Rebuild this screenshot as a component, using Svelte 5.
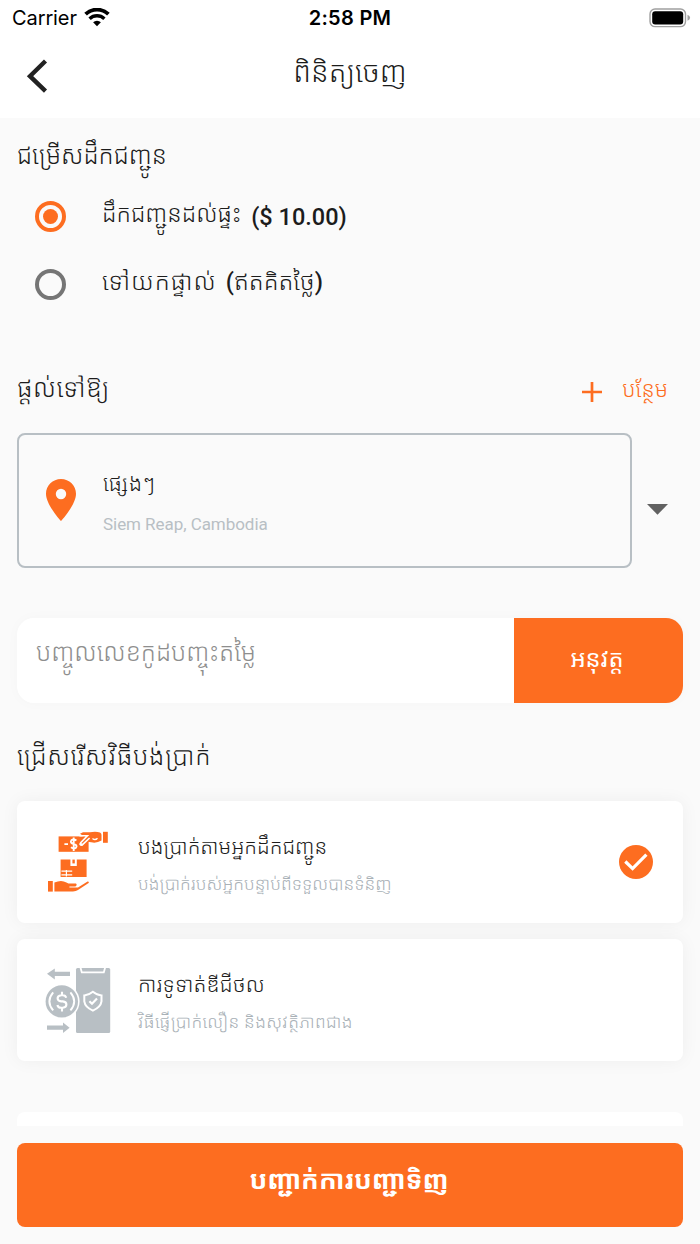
<script lang="ts">
  type Delivery = { id: string; label: string; price: string }
  type Payment = { id: string; title: string; hint: string }

  const deliveries: Delivery[] = [
    { id: 'home', label: 'ដឹកជញ្ជូនដល់ផ្ទះ', price: '$ 10.00' },
    { id: 'pickup', label: 'ទៅយកផ្ទាល់', price: 'ឥតគិតថ្លៃ' }
  ]

  const payments: Payment[] = [
    { id: 'cash', title: 'បងប្រាក់តាមអ្នកដឹកជញ្ជូន', hint: 'បង់ប្រាក់របស់អ្នកបន្ទាប់ពីទទួលបានទំនិញ' },
    { id: 'digital', title: 'ការទូទាត់ឌីជីថល', hint: 'វិធីផ្ញើប្រាក់លឿន និងសុវត្ថិភាពជាង' }
  ]

  let delivery = $state('home')
  let payment = $state('cash')
</script>

<div class="screen">
  <div class="status">
    <div class="carrier">
      <span>Carrier</span>
      <svg width="26" height="19" viewBox="0 0 26 19">
        <path d="M1.6 6.2A16.4 16.4 0 0 1 24.4 6.2" fill="none" stroke="#000" stroke-width="3.8" />
        <path d="M5.6 10.7A10.8 10.8 0 0 1 20.4 10.7" fill="none" stroke="#000" stroke-width="3.4" />
        <path d="M13 18.2l-3.9-3.9a5.6 5.6 0 0 1 7.8 0z" />
      </svg>
    </div>
    <b class="clock">2:58 PM</b>
    <svg class="battery" width="42" height="20" viewBox="0 0 42 20">
      <rect x="1" y="1" width="35.5" height="17.6" rx="5" fill="none" stroke="#a0a0a0" stroke-width="1.4" />
      <rect x="3.2" y="3.2" width="31" height="13.2" rx="3" />
      <path d="M38.5 6.8q2.6 1 2.6 3t-2.6 3z" fill="#a0a0a0" />
    </svg>
  </div>

  <header>
    <button class="back" aria-label="Back">
      <svg width="24" height="36" viewBox="0 0 24 36">
        <path d="M20.5 3L5 18.2l15.5 15" fill="none" stroke="#222" stroke-width="4.4" />
      </svg>
    </button>
    <h1>ពិនិត្យចេញ</h1>
  </header>

  <main>
    <h2 class="t-delivery">ជម្រើសដឹកជញ្ជូន</h2>
    {#each deliveries as d (d.id)}
      <button class="option {d.id}" onclick={() => delivery = d.id}>
        <span class="radio" class:on={delivery === d.id}></span>
        <span class="label">{d.label}</span>
        <span class="price">(<span class="amount">{d.price}</span>)</span>
      </button>
    {/each}

    <div class="deliver-to">
      <h2 class="t-to">ផ្តល់ទៅឱ្យ</h2>
      <button class="add">
        <svg width="20" height="20" viewBox="0 0 20 20"><path d="M10 0v20M0 10h20" stroke="#fd6d20" stroke-width="2.7" /></svg>
        <span>បន្ថែម</span>
      </button>
    </div>

    <div class="address-row">
      <div class="address">
        <svg width="30" height="42" viewBox="0 0 30 42">
          <path fill="#fd6d20" fill-rule="evenodd" d="M15 0C6.7 0 0 6.6 0 14.8C0 26 15 42 15 42S30 26 30 14.8C30 6.6 23.3 0 15 0zM15 20.2a5.2 5.2 0 1 1 0-10.4a5.2 5.2 0 0 1 0 10.4z" />
        </svg>
        <div class="place">
          <span class="name">ផ្សេងៗ</span>
          <span class="city">Siem Reap, Cambodia</span>
        </div>
      </div>
      <svg class="caret" width="21" height="11" viewBox="0 0 21 11"><path d="M0 0h21L10.5 10.8z" fill="#616161" /></svg>
    </div>

    <div class="coupon">
      <div class="field"><span>បញ្ចូលលេខកូដបញ្ចុះតម្លៃ</span></div>
      <button class="apply"><span>អនុវត្ត</span></button>
    </div>

    <h2 class="t-pay">ជ្រើសរើសវិធីបង់ប្រាក់</h2>
    <div class="payments">
      {#each payments as p (p.id)}
        <button class="card {p.id}" onclick={() => payment = p.id}>
          {#if p.id === 'cash'}
            <svg width="66" height="66" viewBox="0 0 66 66">
              <g fill="#fd6d20">
                <rect x="13.6" y="7.4" width="30" height="15.4" />
                <rect x="58" y="2.8" width="4.8" height="11" />
                <path d="M35 4.8L38 3.2h7q6-.8 10 .2q1.5.6 1.5 2.4v5.8q-4 2.4-8.6 2l-5.4-.8-4 3.6q-3 .6-4.5-1.2l4-8.4z" />
                <path d="M15.6 30.6h9.8V37h6.4v-6.4h9.8V48h-26z" />
                <rect x="3" y="52" width="4.8" height="10.6" />
                <path d="M9.4 53.4q7-3 12 0l2 1.2h7.6q1.6 1.6-.6 3h-6v.8h8.6l9.6-6q2-.2 1 1.6l-10.6 7q-2 1.4-5 1.4H9.4z" />
                <path d="M27.4 30.6h2.4v3.8h-2.4z" />
              </g>
              <g fill="none" stroke="#fff">
                <path d="M34.4 6.8h8l-6.7 6.8q-1.4 3 1.3 2.6l7.6-7.2" stroke-width="1.6" />
                <path d="M47.5 9.4q2.6 2.4 5-.2" stroke-width="1.3" />
                <path d="M31.4 11.6q-2.6-2-4.8-.6c-1.5 1.8-.6 3.4 2.1 4s3.7 2 2.1 3.9q-2.2 1.4-4.8-.6M28.7 8.4V22" stroke-width="1.9" />
                <path d="M19.4 15.2h3.6M34.6 15.2h2.6" stroke-width="1.8" />
                <path d="M16.4 42.2h10.8M16.4 45.8h10.8M21.4 41v6.4" stroke-width="1.2" />
              </g>
            </svg>
          {:else}
            <svg width="66" height="66" viewBox="0 0 66 66">
              <g fill="#b8bfc4">
                <path d="M2 6.8l7.8-5.4v3.4H25V9H9.8v3.4z" />
                <path d="M24.6 60.8L18 55.4v3.2H2v4.2h16v3.2z" />
                <rect x="31" y="1" width="34.2" height="65" rx="1.5" />
              </g>
              <circle cx="16.8" cy="34.4" r="17.8" fill="#fff" />
              <circle cx="16.8" cy="34.4" r="16.2" fill="#b8bfc4" />
              <g fill="none" stroke="#fff">
                <path d="M35.4 .2l1.4 5.2h22L60.2 .2" stroke-width="1.8" />
                <path d="M8.2 25.4q-7.6 9 0 18M25.4 25.4q7.6 9 0 18" stroke-width="1.9" />
                <path d="M21.2 30.8q-.6-2.6-3.4-2.6h-1.6q-3.6.4-3.6 3t3.6 3.2h1.6q3.6.4 3.6 3.2t-3.6 3.2h-1.6q-3.2 0-3.8-2.8M17 24.8v3.4M17 40.6v3.8" stroke-width="2.1" />
                <path d="M47.9 24.8q4 3.4 8.6 3.6v6q-.8 5.8-8.6 9.2q-7.8-3.4-8.6-9.2v-6q4.6-.2 8.6-3.6z" stroke-width="2" />
                <path d="M44.4 34.2l2.6 2.6l5-5.2" stroke-width="2.2" />
              </g>
            </svg>
          {/if}
          <span class="text">
            <span class="title">{p.title}</span>
            <span class="hint">{p.hint}</span>
          </span>
          {#if payment === p.id}
            <svg class="check" width="34" height="34" viewBox="0 0 34 34">
              <circle cx="17" cy="17" r="17" fill="#fd6d20" />
              <path d="M6.3 16.5l7.3 7.1L27.4 9.7" fill="none" stroke="#fff" stroke-width="3.2" />
            </svg>
          {/if}
        </button>
      {/each}
    </div>
    <div class="summary"></div>
  </main>

  <footer>
    <button class="confirm"><span>បញ្ជាក់ការបញ្ជាទិញ</span></button>
  </footer>
</div>

<style>
  :global(body) { margin: 0; background: #fafafa; }
  .screen { width: 700px; height: 1244px; overflow: hidden; display: flex; flex-direction: column; background: #fafafa; color: #1c1c1c; font-family: Roboto, "Noto Sans Khmer", "Khmer OS", "Noto Sans", sans-serif; font-weight: 300; }
  button { border: 0; padding: 0; background: none; font: inherit; color: inherit; text-align: left; }
  h1, h2 { margin: 0; font-weight: inherit; white-space: nowrap; }
  span { white-space: nowrap; }
  svg { flex: none; display: block; }

  .status { height: 36px; flex: none; display: grid; grid-template-columns: 1fr auto 1fr; align-items: center; padding: 0 9px 0 12px; box-sizing: border-box; background: #fff; color: #000; font-family: Inter, sans-serif; font-size: 20px; font-weight: 400; }
  .carrier { display: flex; align-items: center; gap: 7px; letter-spacing: -.1px; }
  .carrier svg { margin-bottom: 2px; }
  .clock { font-weight: 600; letter-spacing: .3px; margin-right: 3px; }
  .battery { justify-self: end; margin-bottom: 1px; }
  header { height: 82px; flex: none; display: grid; grid-template-columns: 60px 1fr 60px; background: #fff; }
  .back { display: flex; align-items: flex-start; padding: 22px 0 0 25px; }
  h1 { text-align: center; font-size: 28.8px; line-height: 72px; }

  main { flex: 1; min-height: 0; overflow: hidden; padding: 0 17px; }
  h2 { font-size: 24.6px; line-height: 40px; }
  .t-delivery { padding-top: 18px; height: 46px; }
  .option { display: flex; align-items: center; width: 100%; height: 68px; padding-left: 18px; box-sizing: border-box; font-size: 23.5px; }
  .radio { width: 23px; height: 23px; border: 4px solid #757575; border-radius: 50%; margin-right: 36px; display: grid; place-items: center; }
  .radio.on { border-color: #fd6d20; }
  .radio.on::after { content: ''; width: 15px; height: 15px; border-radius: 50%; background: #fd6d20; }
  .label { padding-bottom: 6px; }
  .pickup .label { font-size: 24.5px; letter-spacing: 1px; padding-bottom: 8px; }
  .price { margin-left: 10px; font-weight: 500; padding-top: 1px; }
  .pickup .price { padding: 0 0 8px; margin-left: 9px; }
  .pickup .amount { font-weight: 300; font-size: 24.2px; }
  .deliver-to { display: flex; justify-content: space-between; margin-top: 52px; height: 63px; }
  .t-to { font-size: 25.3px; letter-spacing: .5px; line-height: 38px; }
  .add { display: flex; align-items: center; gap: 20px; height: 44px; padding-right: 15px; color: #fd6d20; font-size: 21.6px; }
  .add span { padding-bottom: 7px; }
  .address-row { display: flex; align-items: center; gap: 15px; }
  .address { display: flex; align-items: center; width: 615px; height: 135px; box-sizing: border-box; border: 2px solid #b8bfc4; border-radius: 8px; padding-left: 27px; gap: 27px; }
  .address svg { margin-bottom: 1px; }
  .place { display: flex; flex-direction: column; padding-top: 10px; }
  .name { font-size: 21.3px; line-height: 36px; letter-spacing: .8px; }
  .city { font-size: 17px; line-height: 44px; color: #b8bfc4; font-weight: 400; letter-spacing: -.05px; }
  .caret { margin-top: 18px; }
  .coupon { display: flex; height: 85px; margin-top: 50px; border-radius: 17px; overflow: hidden; box-shadow: 0 0 14px rgba(0, 0, 0, .025); }
  .field { flex: 1; background: #fff; padding-left: 19px; color: #8e8e8e; font-size: 24.7px; line-height: 69px; }
  .apply { width: 169px; background: #fd6d20; color: #fff; text-align: center; font-size: 23.8px; font-weight: 400; padding: 0 3px 6px 0; }
  .t-pay { padding-top: 34px; height: 64px; font-size: 25px; letter-spacing: .7px; }
  .payments { display: flex; flex-direction: column; gap: 16px; }
  .card { display: flex; align-items: center; width: 666px; height: 122px; box-sizing: border-box; padding: 0 30.5px 0 28px; background: #fff; border-radius: 8px; box-shadow: 0 0 18px rgba(0, 0, 0, .05); }
  .text { display: flex; flex-direction: column; flex: 1; margin-left: 27px; padding-top: 6px; }
  .title { font-size: 20.7px; line-height: 38px; }
  .digital .title { font-size: 20.9px; letter-spacing: .2px; }
  .hint { font-size: 17.5px; line-height: 36px; color: #a9b1b7; }
  .digital .hint { letter-spacing: .3px; }
  .summary { height: 40px; margin-top: 51px; background: #fff; border-radius: 8px; }
  footer { flex: none; height: 118px; box-sizing: border-box; padding: 17px 17px 0; background: #fafafa; }
  .confirm { width: 100%; height: 84px; border-radius: 8px; background: #fd6d20; color: #fff; text-align: center; font-size: 26.2px; font-weight: 700; padding: 0 2px 12px 0; }
</style>
